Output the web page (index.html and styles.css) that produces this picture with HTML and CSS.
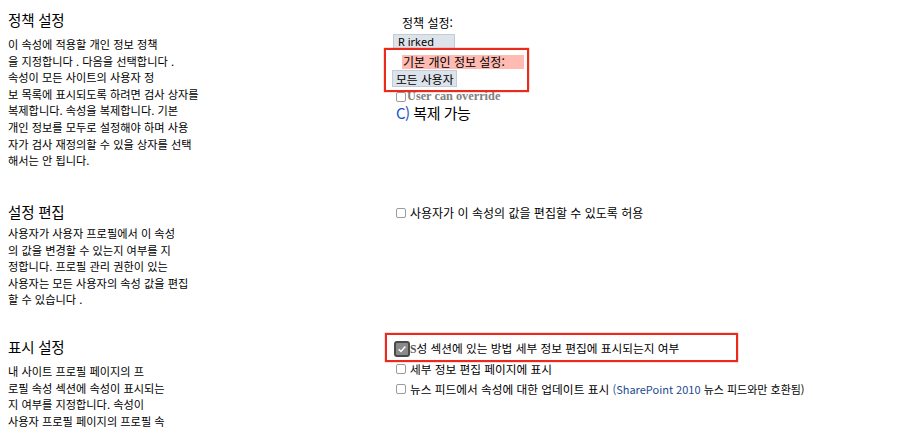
FILE: index.html
```html
<!DOCTYPE html>
<html lang="ko">
<head>
<meta charset="utf-8">
<link rel="stylesheet" href="styles.css">
</head>
<body>
<div class="page">
  <section class="row row1">
    <div class="desc">
      <h2 class="head h1">정책 설정</h2>
      <p class="text t1">이 속성에 적용할 개인 정보 정책<br>을 지정합니다 . 다음을 선택합니다 .<br>속성이 모든 사이트의 사용자 정<br>보 목록에 표시되도록 하려면 검사 상자를<br>복제합니다. 속성을 복제합니다. 기본<br>개인 정보를 모두로 설정해야 하며 사용<br>자가 검사 재정의할 수 있을 상자를 선택<br>해서는 안 됩니다.</p>
    </div>
    <div class="ctl ctl1">
      <div class="label">정책 설정:</div>
      <div class="select sel1">R irked</div>
      <div class="band">기본 개인 정보 설정:</div>
      <div class="select sel2">모든 사용자</div>
      <div class="override"><span class="box small"></span><span class="ov-text">User can override</span></div>
      <div class="replicate"><span class="c">C)</span> 복제 가능</div>
    </div>
  </section>

  <section class="row row2">
    <div class="desc">
      <h2 class="head h2">설정 편집</h2>
      <p class="text t2">사용자가 사용자 프로필에서 이 속성<br>의 값을 변경할 수 있는지 여부를 지<br>정합니다. 프로필 관리 권한이 있는<br>사용자는 모든 사용자의 속성 값을 편집<br>할 수 있습니다 .</p>
    </div>
    <div class="ctl ctl2">
      <div class="check edit"><span class="box small"></span><span>사용자가 이 속성의 값을 편집할 수 있도록 허용</span></div>
    </div>
  </section>

  <section class="row row3">
    <div class="desc">
      <h2 class="head h3">표시 설정</h2>
      <p class="text t3">내 사이트 프로필 페이지의 프<br>로필 속성 섹션에 속성이 표시되는<br>지 여부를 지정합니다. 속성이<br>사용자 프로필 페이지의 프로필 속</p>
    </div>
    <div class="ctl ctl3">
      <div class="check first"><span class="box big"><svg viewBox="0 0 12 12" width="10" height="10"><path d="M2 6.2 L4.8 9 L10 3" fill="none" stroke="#fff" stroke-width="1.8"/></svg></span><span><span class="s">S</span>성 섹션에 있는 방법 세부 정보 편집에 표시되는지 여부</span></div>
      <div class="check"><span class="box small"></span><span>세부 정보 편집 페이지에 표시</span></div>
      <div class="check"><span class="box small"></span><span>뉴스 피드에서 속성에 대한 업데이트 표시 <span class="note"><span class="blue">(SharePoint 2010</span> 뉴스 피드와만 호환됨)</span></span></div>
    </div>
  </section>

  <div class="annot a1"></div>
  <div class="annot a2"></div>
</div>
</body>
</html>
```

FILE: styles.css
```css
* { box-sizing: border-box; }
html, body { margin: 0; padding: 0; background: #fff; }
body {
  font-family: "Noto Sans CJK KR", "Noto Sans", sans-serif;
  color: #000;
}
.page {
  position: relative;
  width: 904px;
  height: 434px;
  padding-left: 8px;
  overflow: hidden;
}
.row {
  display: grid;
  grid-template-columns: 384px 1fr;
}
.row1 { height: 202px; }
.row2 { height: 135px; }
.row3 { height: 97px; }

.head {
  margin: 0;
  font-size: 14.5px;
  font-weight: 400;
  line-height: 20px;
  letter-spacing: -0.2px;
  color: #000;
}
.h1 { margin-top: 10px; }
.h2 { margin-top: 0; }
.h3 { margin-top: 0; }

.text {
  margin: 0;
  font-size: 11.2px;
  line-height: 16.6px;
  color: #000;
}
.t1 { margin-top: 6px; }
.t2 { margin-top: 3px; }
.t3 { margin-top: 6px; }

.ctl { display: flex; flex-direction: column; align-items: flex-start; }

.label {
  margin-top: 15px;
  margin-left: 10px;
  font-size: 12px;
  line-height: 16px;
}
.select {
  border: 1px solid #c3ccd6;
  background: #dde3ea;
  color: #000;
  white-space: nowrap;
}
.sel1 {
  margin-top: 3px;
  margin-left: 1px;
  width: 62px;
  height: 16px;
  padding-left: 4px;
  font-family: "Noto Sans", sans-serif;
  font-size: 11px;
  line-height: 14px;
}
.band {
  margin-top: 5px;
  margin-left: 10px;
  width: 122px;
  height: 14px;
  padding-left: 1px;
  background: #ffbab2;
  font-size: 12px;
  line-height: 14px;
}
.sel2 {
  margin-top: 1px;
  width: 65px;
  height: 17px;
  padding-left: 3px;
  font-size: 11.8px;
  line-height: 15px;
}
.override {
  margin-top: 3px;
  margin-left: 4px;
  display: flex;
  align-items: center;
  height: 13px;
}
.ov-text {
  margin-left: 1px;
  font-family: "Liberation Serif", serif;
  font-weight: 700;
  font-size: 12.3px;
  line-height: 13px;
  color: #808080;
}
.replicate {
  margin-top: 1px;
  margin-left: 4px;
  font-size: 15px;
  line-height: 18px;
  letter-spacing: -0.5px;
}
.replicate .c { color: #1c4fc4; }

.box {
  display: inline-flex;
  align-items: center;
  justify-content: center;
  flex: none;
}
.box.small {
  width: 10px;
  height: 10px;
  border: 1px solid #9a9a9a;
  border-radius: 2px;
  background: #fff;
}
.box.big {
  width: 16px;
  height: 16px;
  border: 2px solid #4a4a4a;
  border-radius: 3px;
  background: #8a8a8a;
}

.check {
  display: flex;
  align-items: center;
  font-size: 11.7px;
  line-height: 16px;
  white-space: nowrap;
}
.check .box.small { margin-left: 4px; margin-right: 4px; }
.edit {
  margin-top: 3px;
  font-size: 12px;
}
.ctl3 .check { height: 20px; }
.ctl3 .first { margin-top: 2px; margin-left: 2px; }
.s {
  font-family: "Liberation Serif", serif;
  font-weight: 700;
  color: #555;
}
.note { font-size: 11px; }
.blue { color: #1d4a8e; }

.annot {
  position: absolute;
  border: 2px solid #ec2a1b;
  box-shadow: 0 0 1px #ec2a1b;
  pointer-events: none;
}
.a1 { left: 384px; top: 48px; width: 145px; height: 44px; }
.a2 { left: 385px; top: 333px; width: 353px; height: 29px; }
```
